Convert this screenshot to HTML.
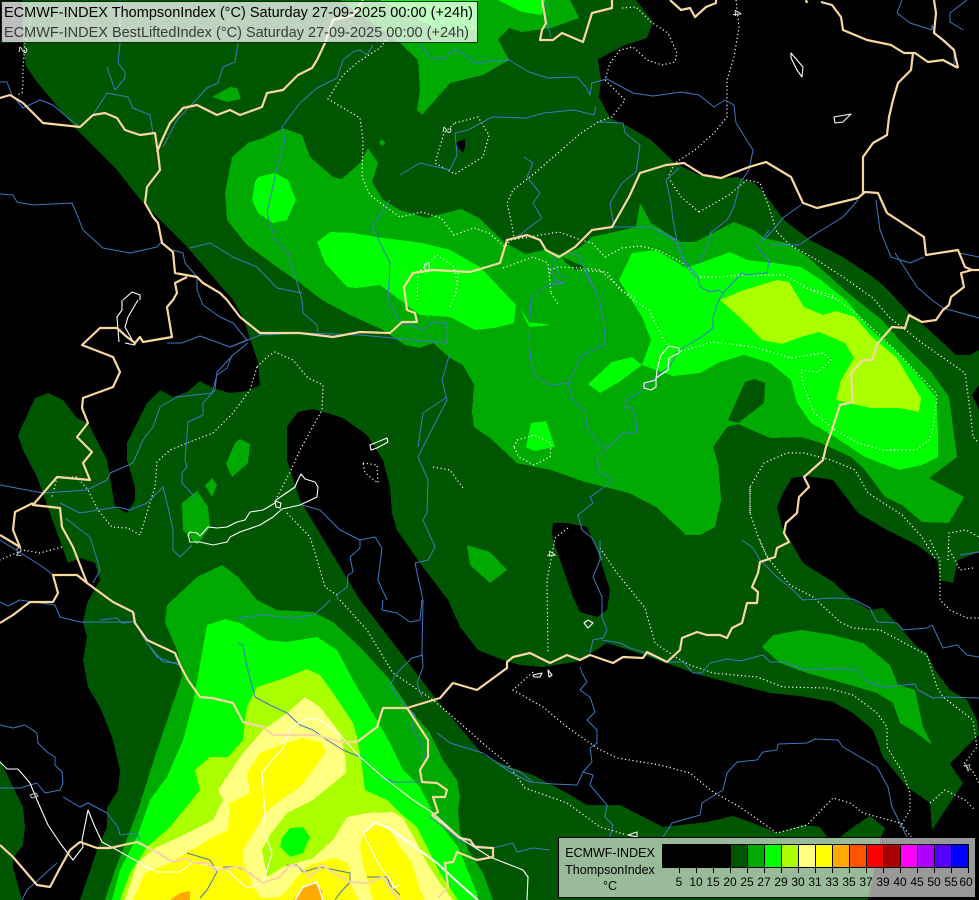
<!DOCTYPE html>
<html lang="en"><head><meta charset="utf-8"><title>ECMWF-INDEX ThompsonIndex</title>
<style>
html,body{margin:0;padding:0;background:#000;width:979px;height:900px;overflow:hidden}
svg{display:block;position:absolute;left:0;top:0}
text{font-family:"Liberation Sans",sans-serif}
.f polygon{shape-rendering:crispEdges}
.r polyline{fill:none;stroke:#3f78c0;stroke-width:1;stroke-linejoin:round}
.d polyline,.d polygon{fill:none;stroke:#fff;stroke-width:1.2;stroke-dasharray:1.2 2.6}
.b polyline{fill:none;stroke:#f8d7a0;stroke-width:2.2;stroke-linejoin:round}
.w polyline,.w polygon{fill:none;stroke:#fff;stroke-width:1.1;stroke-linejoin:round}
</style></head><body>
<svg width="979" height="900" viewBox="0 0 979 900" xmlns="http://www.w3.org/2000/svg">
<rect width="979" height="900" fill="#005500"/>
<g class="f" fill="#000">
<polygon points="0,0 22,0 23,50 26,66 37,82 77,130 117,170 143,203 187,247 233,300 243,318 258,362 260,385 248,391 230,393 213,388 200,381 187,392 173,397 160,390 147,403 127,443 127,460 135,487 135,500 127,513 115,507 107,460 88,423 77,418 63,400 48,393 35,398 18,435 23,450 37,477 50,513 68,563 80,558 95,563 100,580 87,603 83,623 87,637 83,660 88,687 100,707 113,740 120,770 118,790 107,808 107,827 97,850 80,900 22,900 13,867 13,858 23,845 25,827 23,807 13,787 0,760"/>
<polygon points="287,427 298,412 313,409 343,418 367,435 383,460 390,487 392,513 397,530 420,563 448,600 460,627 478,650 503,660 520,665 543,667 580,661 588,655 607,643 620,647 643,655 700,675 770,693 800,696 833,702 853,713 873,730 883,757 907,787 930,803 932,830 963,783 950,764 973,740 979,735 979,900 868,900 880,840 885,828 870,816 853,827 840,837 827,837 820,827 803,825 777,833 753,823 733,816 707,822 663,827 620,805 587,805 567,793 533,775 510,767 483,755 437,700 360,600 300,500 287,460"/>
<polygon points="783,493 792,478 807,476 833,480 858,513 887,530 917,545 937,560 940,580 953,583 958,560 979,552 979,735 977,720 967,700 950,690 935,670 927,653 917,647 883,608 870,610 853,600 833,582 803,563 790,540 783,530 777,507"/>
<polygon points="552,533 553,523 567,523 587,527 597,550 610,590 607,610 597,617 580,612 573,597 553,540"/>
<polygon points="636,0 653,22 647,38 625,45 598,59 601,80 599,97 610,118 629,127 651,140 675,163 699,175 721,178 738,177 754,183 764,193 784,220 810,240 843,257 873,277 885,287 909,313 929,330 956,355 970,355 979,350 979,0"/>
<polygon points="979,385 972,395 979,410"/>
</g>
<g class="f" fill="#00aa00">
<polygon points="340,0 400,43 418,60 420,90 417,110 422,115 450,83 483,75 509,60 498,39 509,28 522,32 551,28 579,18 570,0"/>
<polygon points="283,128 302,135 310,157 333,177 342,179 360,163 368,148 378,163 372,182 383,200 400,210 426,218 461,209 479,218 505,243 526,254 544,250 562,255 581,247 592,237 636,227 640,203 651,223 681,242 695,242 734,222 754,230 764,238 787,243 808,257 848,293 882,320 902,343 932,373 949,397 957,457 929,478 964,497 949,523 922,522 902,505 885,497 865,470 851,457 821,443 801,437 770,438 738,424 727,427 713,447 718,463 721,500 715,527 700,535 686,535 656,507 629,493 585,482 551,470 517,463 490,438 474,427 472,412 474,385 463,365 450,358 433,343 420,348 405,345 383,330 350,315 322,300 300,283 277,267 247,245 227,220 225,193 232,157 248,143 263,138"/>
<polygon points="212,97 230,87 237,88 241,99 227,102"/>
<polygon points="379,142 382,139 385,143 382,146"/>
<polygon points="226,464 235,443 240,439 250,444 248,463 232,477"/>
<polygon points="205,485 212,478 217,485 212,497"/>
<polygon points="182,503 197,491 208,507 210,527 197,545 183,530"/>
<polygon points="467,545 490,552 507,570 490,583 470,565"/>
<polygon points="762,647 773,635 802,630 833,635 863,643 890,665 898,685 915,690 923,727 932,745 915,732 900,723 893,703 877,693 850,685 807,673 780,663"/>
<polygon points="167,605 197,577 222,565 238,577 257,600 277,610 313,612 333,622 360,647 390,680 410,710 430,733 443,760 457,780 460,797 458,810 460,833 470,853 483,873 493,900 105,900 115,870 138,810 157,750 173,703 182,677 180,663 177,650 165,623"/>
</g>
<g class="f" fill="#005500">
<polygon points="738,423 728,420 745,382 754,379 765,383 764,403"/>
<polygon points="562,257 585,267 577,271 566,263"/>
</g>
<polygon fill="#000" points="455,143 465,139 465,147 463,153" shape-rendering="crispEdges"/>
<g class="f" fill="#00ff00">
<polygon points="498,0 522,12 542,15 545,0"/>
<polygon points="380,0 440,30 478,30 478,0"/>
<polygon points="258,177 275,173 288,180 296,200 287,220 273,223 258,213 252,200 255,182"/>
<polygon points="317,242 330,232 353,233 383,238 400,240 422,243 450,250 480,267 516,305 514,323 494,328 475,330 450,317 420,315 400,300 380,285 357,288 347,287 325,263"/>
<polygon points="520,308 529,322 551,325 529,327"/>
<polygon points="588,384 612,362 632,357 642,365 619,382 600,393"/>
<polygon points="526,447 531,423 546,421 555,447 534,451"/>
<polygon points="619,280 632,253 656,250 673,260 686,268 703,262 730,252 747,260 774,263 801,267 821,280 848,302 868,327 895,350 916,373 936,397 938,430 938,457 922,465 899,470 865,457 835,437 811,423 797,403 791,380 770,363 744,355 720,362 700,373 673,376 642,365 651,340 642,317"/>
<polygon points="207,625 225,619 240,623 267,640 287,642 317,637 337,650 353,680 377,720 390,743 403,770 420,787 433,813 447,833 458,847 477,893 478,900 112,900 120,870 137,837 150,800 167,777 183,740 193,703 202,653"/>
</g>
<g class="f" fill="#aaff00">
<polygon points="720,300 744,290 777,280 789,282 804,307 823,315 836,311 855,317 872,337 897,358 921,398 919,412 899,408 870,408 836,400 841,380 854,358 845,343 819,332 801,337 782,344 762,340 737,315"/>
<polygon points="257,687 263,685 287,677 307,669 320,675 333,693 353,723 357,737 362,767 365,790 387,800 400,813 417,827 427,847 440,873 458,900 120,900 130,873 147,847 170,827 200,790 195,770 210,757 228,757 243,740 245,720 247,707"/>
</g>
<polygon fill="#ffff80" shape-rendering="crispEdges" points="305,697 320,707 340,733 346,760 346,773 313,800 287,813 270,835 262,850 267,877 283,867 313,858 333,840 347,817 367,813 393,812 403,818 417,843 427,863 440,883 453,900 125,900 137,863 157,847 177,838 213,820 223,800 218,790 243,753 263,730 287,713"/>
<polygon fill="#00ff00" shape-rendering="crispEdges" points="282,838 290,828 303,827 310,837 303,853 290,857 280,847"/>
<g class="f" fill="#ffff00">
<polygon points="303,738 322,743 326,752 313,770 300,787 277,803 265,813 257,827 243,850 243,860 253,887 262,898 280,897 290,887 297,877 310,865 333,858 348,863 353,890 359,900 133,900 145,873 170,863 200,845 213,837 228,830 230,803 250,793 247,773 260,753 280,745"/>
<polygon points="363,833 375,823 390,830 400,847 412,863 420,890 425,900 373,900 363,863 360,847"/>
</g>
<g class="f" fill="#ffaa00">
<polygon points="293,900 303,887 313,882 322,890 323,900"/>
<polygon points="170,900 180,893 190,891 190,900"/>
</g>

<g class="d">
<polyline points="32,13 25,43 23,67 23,83 22,93 17,95"/>
<polyline points="388,37 380,48 358,62 343,75 328,99 360,118 363,140 362,177 370,195 387,208 400,217 422,212 441,218 454,235 474,228 489,233 505,247 511,240 559,232 581,240 592,243 605,257 622,248 640,246 658,250 681,262 699,277 721,277 740,275 784,275 799,283 817,293 839,300"/>
<polyline points="803,287 831,295 855,313 882,337 905,360 936,393 937,400 932,433 929,440 916,450 882,450 858,443 835,430 814,413 804,387 801,370 818,372 831,360 823,353 791,358 754,347 713,342 679,352"/>
<polyline points="666,345 659,330 649,310 629,297 619,287 600,270 582,268 558,267 550,270 550,275"/>
<polyline points="778,233 790,245 817,260 843,277 873,298 889,317 922,343 965,373 970,410 973,437 979,443"/>
<polyline points="699,212 681,197 668,177 675,163"/>
<polyline points="699,212 729,195 747,180 760,183 769,207 777,233"/>
<polyline points="622,8 636,7 651,22 668,33 677,53 675,62 662,65 647,60 633,47 620,50 610,63 605,80 625,100 612,117 598,122 581,133 559,152 535,173 513,190 507,203 511,220 514,237"/>
<polyline points="736,0 739,27 734,57 727,80 727,117 714,133 695,150 675,163"/>
<polygon points="455,123 478,117 489,135 483,157 455,174 435,163 444,133"/>
<polyline points="750,513 750,487 764,463 787,453 804,453 831,460 855,470 868,493 902,515 922,537 936,560"/>
<polyline points="750,487 750,513 760,542 769,560"/>
<polyline points="930,540 940,560 940,600 950,610 967,618 979,618"/>
<polyline points="948,547 960,570 973,568"/>
<polyline points="948,560 949,533 966,530 979,537"/>
<polyline points="600,548 617,573 645,608 655,643 677,658 690,665 713,673 757,677 783,687 827,688 853,695 877,713 887,727 887,747 903,773 910,793 910,810 900,827"/>
<polyline points="760,540 767,557 790,585 813,597 840,622 853,628 880,630 927,655 937,687 943,697 973,720 977,747 963,765 972,770 979,783"/>
<polyline points="533,672 513,690 543,707 567,727 597,748 617,758 660,765 690,773 713,792 740,807 777,833 807,825 833,798 850,803 863,813 900,823 912,838"/>
<polyline points="340,600 367,630 393,673 433,700 460,723 487,747 507,763 525,788 567,803 600,827 627,835"/>
<polyline points="930,803 945,790 965,800 975,810"/>
<polyline points="568,528 555,538 551,560 547,580 548,653"/>
<polyline points="257,367 267,357 275,352 293,360 308,378 323,385 322,410 300,450 290,472 277,497"/>
<polyline points="257,367 250,390 233,413 213,433 187,443 170,450 157,462 155,487 140,535 128,528 112,527 98,510 88,490 77,477 57,478 52,497"/>
<polyline points="287,513 310,537 315,553 325,587 337,595"/>
<polygon points="363,463 377,465 378,483 365,473"/>
<polyline points="433,467 450,470 463,488"/>
<polyline points="62,547 40,553 23,550 0,560"/>
<polygon points="514,447 517,440 534,435 551,443 550,457 534,465 519,457"/>
<polyline points="551,293 558,304"/>
<polyline points="450,307 457,290 458,273"/>
<polyline points="417,300 418,273 437,255 454,267 457,283 455,297"/>
<polyline points="503,268 533,257 548,263 551,293"/>
<polyline points="577,270 607,272 620,290 636,298"/>
</g>

<g class="r">
<polyline points="0,194 13,195 17,202 33,205 72,203 78,217 83,230 103,248 130,253 157,247 163,240"/>
<polyline points="0,82 7,82 12,95 23,108 40,100 53,105 67,117 80,127 93,115 107,93 128,97 133,108 150,115 153,133"/>
<polyline points="107,67 115,90 125,78 125,72 118,63 120,43 120,0"/>
<polyline points="238,43 235,62 223,67 218,83 207,88 193,103 177,120 163,147"/>
<polyline points="373,45 367,55 360,50 353,52 343,60 337,78 317,88 300,103 282,127 285,140 277,167 267,213 275,240 288,253 297,283 302,300 303,313 317,325 318,333"/>
<polyline points="190,248 210,243 233,257 257,267 277,288 302,293"/>
<polyline points="173,250 183,253 185,263 197,277 197,290 203,305 220,317 233,323 247,340 230,347"/>
<polyline points="167,343 182,343 200,336 230,347 248,340 260,335 303,333 360,335 447,343"/>
<polyline points="248,343 233,355 217,372 215,390 203,403 203,415 188,422 185,460 187,467 182,473 182,483 195,497"/>
<polyline points="232,355 227,368 217,375 212,393 177,397 160,407 153,427 143,440 133,463 110,473 107,480 87,490 43,493 0,485"/>
<polyline points="60,503 80,513 117,507 130,510 147,503 163,487 168,507 173,530 173,550 180,557 192,545"/>
<polyline points="65,518 90,537 95,553 100,570 93,583"/>
<polyline points="0,540 27,557 43,567 53,575"/>
<polyline points="302,505 320,510 340,530 360,540 375,537 382,548 378,580 387,600"/>
<polyline points="360,540 360,548 350,557 353,572 348,575 347,587 337,595 338,600"/>
<polyline points="450,353 442,380 447,400 430,433 418,457 428,480 427,513 423,520 435,547 428,560 415,563 418,577 423,600 422,653 423,667 417,683 422,697"/>
<polyline points="447,397 423,413 418,447"/>
<polyline points="383,600 382,610 397,613 410,622 420,620 422,600"/>
<polyline points="423,655 412,658 397,673 390,685 400,700 415,715 412,728 423,747 425,760"/>
<polyline points="437,733 450,743 483,753 510,772 530,782 553,784 577,785 583,772 592,762 590,748 597,743 597,730 587,720 595,712 590,697 580,690 587,682 582,673 580,667"/>
<polyline points="500,765 520,772 533,782"/>
<polyline points="583,772 593,775 590,785 607,805 605,817 613,825 610,837"/>
<polyline points="600,540 600,560 593,577 602,597 602,617 607,630 603,638 593,640 590,653"/>
<polyline points="602,640 620,643 630,648 643,652 667,662 683,662 693,673 702,673 710,663 727,659 740,661 763,655 770,662 783,662 807,670 840,668 858,670 867,682 883,687 915,684 918,690 933,698 947,697 979,698"/>
<polyline points="742,540 753,548 760,560 777,577 793,590 803,600 833,598 853,599 870,608 877,622 897,623 903,630 927,628 932,625 943,648 957,645 967,655 979,657"/>
<polyline points="979,552 960,555"/>
<polyline points="663,837 672,823 700,815 702,803 723,790 727,773 737,762 757,760 763,752 777,750 778,744 807,743 815,739 838,740 843,747 877,767 888,787 892,807 907,837"/>
<polyline points="553,255 558,273 566,278 565,282 548,285 531,298 529,337 531,363 536,377 551,385 568,383 582,355 605,345 605,333 600,303 587,273 578,255 565,253"/>
<polyline points="568,383 573,400 585,412 587,427 600,445 609,447 597,457 600,473 612,478 610,483 590,497 593,503 578,515 582,530 592,538 598,550 602,560"/>
<polyline points="609,447 622,433 636,433 637,423 632,408 625,407 625,402 644,388 656,377 669,367 679,350 700,338 713,328 713,317 718,302 723,293 718,290 710,292 700,287 698,277 686,263 674,240 659,230"/>
<polyline points="700,263 711,233 710,233 727,220 734,207 740,183 749,170 753,150 736,123 734,105 725,100 714,107 699,95 681,92 653,96 633,93 607,79 592,83 590,95 586,87 577,77 548,78 529,72 509,60 474,63 459,50 452,50 444,59 430,57 420,45"/>
<polyline points="723,293 742,273 747,275 767,273 769,260 757,247 769,230"/>
<polyline points="769,245 799,245 817,233 843,217 858,200"/>
<polyline points="764,240 773,230 784,217 801,205"/>
<polyline points="876,200 880,230 891,257 910,263 924,257"/>
<polyline points="895,253 917,287 932,300 943,308 979,318"/>
<polyline points="959,253 979,257"/>
<polyline points="967,0 950,13 950,22 963,30"/>
<polyline points="902,0 897,13 910,23 932,30 932,25 936,35 954,50 954,67"/>
<polyline points="596,107 594,115 574,110 544,113 526,118 492,117 468,130 455,133 457,155 450,170 420,163 400,175"/>
<polyline points="524,157 533,163 527,177 540,193 533,203 542,218 526,230 516,238"/>
<polyline points="598,122 623,123 625,133 640,145 636,172 622,183 610,203 614,227 651,227 677,240"/>
<polyline points="679,168 666,180 671,203 673,220 677,240 684,263 695,277"/>
<polyline points="551,267 555,280 564,283 548,285"/>
<polyline points="585,272 596,293"/>
<polyline points="548,0 544,10 551,37"/>
<polyline points="390,200 372,227 390,263 388,300 400,322 423,330 433,322 447,323 447,343"/>
<polyline points="100,620 117,618 122,623 135,622 145,640 157,657 173,663 180,665"/>
<polyline points="238,643 243,645 247,667 255,697 270,705 287,713 300,725 313,730 327,740 343,750 360,757 383,777 393,782 422,782"/>
<polyline points="237,618 263,615 293,618 313,615 322,608 330,600"/>
<polyline points="430,817 447,830 460,840 473,845 493,848 513,843 517,852 533,848 550,850"/>
<polyline points="0,725 13,728 25,725 37,733 38,743 47,752 55,757 55,765 62,772 63,783 60,790 45,793 37,783 20,788 0,788"/>
<polyline points="63,797 80,807 88,803 107,813 118,827 120,835 137,833 140,840"/>
<polyline points="0,602 8,606 20,600 33,602 55,605 60,617 80,622 133,622 135,613"/>
<polyline points="147,643 163,662 177,663"/>
<polyline points="57,863 27,890 22,900"/>
<polyline points="187,853 210,860 217,872 207,890 200,898"/>
<polyline points="223,867 237,867 250,873 263,883"/>
<polyline points="287,865 297,865 303,872 320,867 350,873 350,882 340,893 335,900"/>
<polyline points="367,877 387,877 390,885 400,895"/>
</g>

<g class="w">
<polyline points="0,762 7,769 18,769 30,783 37,800 48,825 60,843 73,860 83,847 82,840 88,810 95,827 102,842 117,850 140,863 157,872 180,872 193,862 227,870 247,888 263,883 272,853 263,828 265,813 262,772 283,748 290,728 308,718 320,720 340,735 360,757 383,777 413,800 433,813 463,840 490,857 523,870 528,877 527,900"/>
<polyline points="363,833 375,823 387,827 410,843 437,863 463,887 478,900" style="stroke-width:2"/>
<polyline points="363,833 380,867 392,882 393,888 400,885"/>
<polyline points="295,900 303,887 317,882 323,900" style="stroke-width:1.6"/>
<polygon points="190,532 197,533 200,536 208,527 217,528 227,527 237,522 245,520 250,512 263,510 275,503 276,500 295,487 297,482 301,474 305,479 315,482 318,487 317,497 300,505 282,509 273,517 260,525 240,532 230,537 227,542 213,545 200,542 190,542 188,535"/>
<polygon points="275,501 281,503 280,508 276,507"/>
<polygon points="370,445 387,438 388,442 377,448 371,450"/>
<polyline points="122,300 122,310 117,317 119,342"/>
<polyline points="138,300 128,317 125,327 135,345 125,343"/>
<polyline points="123,300 132,292 140,295 140,300"/>
<polygon points="669,346 679,348 679,353 669,358 668,370 656,378 656,387 651,390 644,388 644,383 656,380 657,370 661,355"/>
<polygon points="791,53 797,60 803,67 802,77 797,70 791,58"/>
<polygon points="834,117 851,114 843,122 835,123"/>
<polygon points="584,623 588,620 593,623 588,628"/>
<polygon points="533,675 542,673 540,677 534,677"/>
<polygon points="548,670 552,675 549,677"/>
<polygon points="628,835 637,832 637,837"/>
<polygon points="30,795 36,793 38,796 32,798" style="stroke:#bbb"/>
</g>

<g class="b">
<polyline points="0,98 10,95 23,103 43,123 80,127 93,115 105,113 117,118 125,130 140,135 155,133 158,153 160,170 147,187 145,203 153,217 158,223 162,243 173,252 175,273 197,277 203,283 220,293 227,300 240,317 260,333 277,333 300,333 333,337 360,332 390,333 402,322 417,322 415,313 407,310 404,287 413,273 433,270 470,272 500,263 507,240 527,235 540,240 546,250 559,257 575,247 592,230 612,227 629,197 640,173 666,165 684,163 703,175 721,178 736,172 749,167 766,162 791,177 803,203 817,208 858,198 865,192 878,193 887,213 924,237 926,255 958,250 965,267 972,270 979,270"/>
<polyline points="972,270 961,273 964,287 951,297 949,305 943,310 936,320 922,322 909,315 905,328 892,327 878,343 872,360 863,360 851,373 853,402 840,405 831,433 826,447 823,460 804,477 809,487 799,497 797,513 786,523 784,533 789,542 777,548 775,557 760,562 758,573 752,587 758,592 757,603 747,603 742,623 732,628 727,638 720,635 707,635 697,632 682,638 680,650 667,662 647,652 643,658 623,657 613,663 590,655 580,660 567,655 550,663 530,653 513,657 507,662 507,668 477,690 453,683 440,698 407,708 383,708 377,727 357,742 340,742 317,735 293,735 273,735 263,727 243,722 233,703 212,698 200,697 188,680 180,665 175,653 147,640 135,623 133,612 113,602 87,583 73,547 62,527 60,508 33,505 57,477 90,480 83,463 92,452 77,437 88,423 82,408 83,398 113,387 120,372 113,357 82,345 100,328 117,328 127,337 135,343 140,337 143,342 172,337 167,307 173,300 177,293 175,283 187,277"/>
<polyline points="33,503 15,512 13,530 20,547 0,535"/>
<polyline points="87,583 77,575 53,575 58,593 53,602 30,602 13,615 0,623"/>
<polyline points="0,845 13,857 37,885 50,887 60,868 70,850 80,842 97,848 110,848 137,842 153,850 173,862 187,858 193,863 207,863 215,870 240,867 263,883 280,877 290,865 300,867 310,877 322,865 333,873 350,882 367,883 383,877 393,893 400,900"/>
<polyline points="407,708 428,740 428,757 420,770 422,782 437,783 447,790 445,797 433,797 438,812 432,815 460,838 470,840 475,847 493,848 493,857 477,860 457,852 453,862 445,863 448,887 438,898"/>
<polyline points="612,0 612,8 592,13 583,42 562,33 553,40 540,40 542,30 546,23 542,0"/>
<polyline points="363,0 353,15 333,20 325,43 317,60 312,68 298,75 283,90 267,93 262,107 240,115 230,110 217,115 197,105 183,108 170,123 162,140 157,152"/>
<polyline points="670,0 681,10 690,8 695,17 706,7 716,3 716,0"/>
<polyline points="821,2 832,5 841,17 843,30 867,40 891,45 904,53 915,53 928,62 943,60 958,68"/>
<polyline points="934,0 936,13 934,33 943,40 954,50 958,68"/>
<polyline points="913,53 911,70 898,83 893,100 889,117 887,135 873,143 863,157 863,193"/>
<polyline points="806,0 807,3"/>
</g>

<g fill="#e8e8e8" font-size="12" text-anchor="middle">
<text x="0" y="0" transform="translate(23,50) rotate(100)" dy="4">2</text>
<text x="0" y="0" transform="translate(447,130) rotate(100)" dy="4">2</text>
<text x="0" y="0" transform="translate(737,13) rotate(85)" dy="4">4</text>
<text x="0" y="0" transform="translate(551,554) rotate(90)" dy="4">4</text>
<text x="0" y="0" transform="translate(19,552)" dy="4" fill="#bbb">2</text>
<text x="0" y="0" transform="translate(968,767) rotate(160)" dy="4" fill="#bbb">4</text>
<text x="0" y="0" transform="translate(427,267)" dy="4">0</text>
</g>

<!-- top title box -->
<rect x="1.5" y="1.5" width="476" height="41" fill="#fff" fill-opacity=".75" stroke="#003000" stroke-width="1" shape-rendering="crispEdges"/>
<text x="4" y="17" font-size="14.5" fill="#000" textLength="469" lengthAdjust="spacing">ECMWF-INDEX ThompsonIndex (°C) Saturday 27-09-2025 00:00 (+24h)</text>
<text x="4" y="37" font-size="14.5" fill="#3a3a3a" textLength="465" lengthAdjust="spacing">ECMWF-INDEX BestLiftedIndex (°C) Saturday 27-09-2025 00:00 (+24h)</text>

<!-- bottom legend -->
<rect x="558.5" y="837.5" width="417" height="60" fill="#fff" fill-opacity=".6" stroke="#000" stroke-width="1" shape-rendering="crispEdges"/>
<g shape-rendering="crispEdges">
<rect x="662" y="844" width="68" height="23" fill="#000"/>
<rect x="730" y="844" width="17" height="23" fill="#005500"/>
<rect x="747" y="844" width="17" height="23" fill="#00aa00"/>
<rect x="764" y="844" width="17" height="23" fill="#00ff00"/>
<rect x="781" y="844" width="17" height="23" fill="#aaff00"/>
<rect x="798" y="844" width="17" height="23" fill="#ffff80"/>
<rect x="815" y="844" width="17" height="23" fill="#ffff00"/>
<rect x="832" y="844" width="17" height="23" fill="#ffaa00"/>
<rect x="849" y="844" width="17" height="23" fill="#ff5500"/>
<rect x="866" y="844" width="17" height="23" fill="#ff0000"/>
<rect x="883" y="844" width="17" height="23" fill="#aa0000"/>
<rect x="900" y="844" width="17" height="23" fill="#ff00ff"/>
<rect x="917" y="844" width="17" height="23" fill="#aa00ff"/>
<rect x="934" y="844" width="17" height="23" fill="#5500ff"/>
<rect x="951" y="844" width="17" height="23" fill="#0000ff"/>
<rect x="662.5" y="844.5" width="306" height="23" fill="none" stroke="#000"/>
<path d="M679.5 844v29M696.5 844v29M713.5 844v29M730.5 844v29M747.5 844v29M764.5 844v29M781.5 844v29M798.5 844v29M815.5 844v29M832.5 844v29M849.5 844v29M866.5 844v29M883.5 844v29M900.5 844v29M917.5 844v29M934.5 844v29M951.5 844v29M968.5 844v29" stroke="#000" stroke-width="1" fill="none"/>
</g>
<g fill="#000" font-size="12" text-anchor="middle">
<text x="679" y="886">5</text><text x="696" y="886">10</text><text x="713" y="886">15</text><text x="730" y="886">20</text><text x="747" y="886">25</text><text x="764" y="886">27</text><text x="781" y="886">29</text><text x="798" y="886">30</text><text x="815" y="886">31</text><text x="832" y="886">33</text><text x="849" y="886">35</text><text x="866" y="886">37</text><text x="883" y="886">39</text><text x="900" y="886">40</text><text x="917" y="886">45</text><text x="934" y="886">50</text><text x="951" y="886">55</text><text x="966" y="886">60</text>
<text x="610" y="857" font-size="12.5">ECMWF-INDEX</text>
<text x="610" y="874" font-size="12.5">ThompsonIndex</text>
<text x="610" y="890" font-size="12.5">°C</text>
</g>
</svg>
</body></html>
